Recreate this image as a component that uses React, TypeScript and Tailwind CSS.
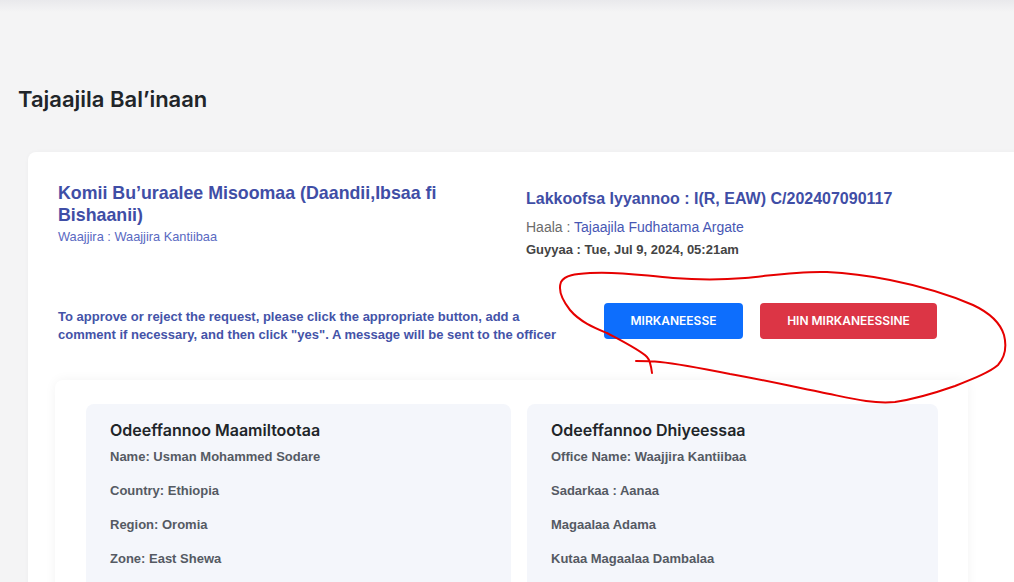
export default function App() {
	return (
		<div className="relative h-[582px] w-[1014px] overflow-hidden bg-[#f4f4f5] font-['Liberation_Sans',Arial,sans-serif]">
			{/* top bar shadow */}
			<div className="h-3 bg-gradient-to-b from-[#e9e9ec] to-[#f4f4f5]" />

			<h1 className="pl-[18px] pt-[73px] font-['Inter',sans-serif] text-[22px] leading-[28px] font-semibold text-[#212529]">
				Tajaajila Bal’inaan
			</h1>

			{/* CARD */}
			<div className="ml-[28px] mt-[39px] w-[1010px] rounded-lg bg-white pl-[30px] pt-[30px] shadow-[0_0_4px_rgba(0,0,0,0.03)]">
				<div className="flex">
					<div className="w-[468px]">
						<h2 className="w-[420px] text-[17.8px] leading-[22px] font-bold text-[#3f4ea6]">
							Komii Bu’uraalee Misoomaa (Daandii,Ibsaa fi Bishaanii)
						</h2>
						<p className="mt-[3px] text-[12.8px] leading-[16px] text-[#5a69c2]">
							Waajjira : Waajjira Kantiibaa
						</p>
					</div>
					<div className="pt-[6px]">
						<h3 className="text-[16px] leading-[22px] font-bold text-[#3f4ea6]">
							Lakkoofsa Iyyannoo : I(R, EAW) C/202407090117
						</h3>
						<p className="mt-[7px] text-[14px] leading-[20px] text-[#6b6b6b]">
							Haala : <span className="text-[#4757b4]">Tajaajila Fudhatama Argate</span>
						</p>
						<p className="mt-[4px] text-[13px] leading-[18px] font-bold text-[#444]">
							Guyyaa : Tue, Jul 9, 2024, 05:21am
						</p>
					</div>
				</div>

				{/* ACTIONS */}
				<div className="mt-[49px] flex items-start">
					<p className="mr-[42px] w-[504px] text-[13px] leading-[18px] font-bold text-[#4453a8]">
						To approve or reject the request, please click the appropriate button, add a comment if necessary, and then click "yes". A message will be sent to the officer
					</p>
					<div className="-mt-[5px] flex gap-[17px] font-['Inter',sans-serif] text-[12px] font-semibold text-white">
						<button className="h-9 w-[139px] rounded bg-[#0d6efd]">MIRKANEESSE</button>
						<button className="h-9 w-[177px] rounded bg-[#dc3545]">HIN MIRKANEESSINE</button>
					</div>
				</div>

				{/* DETAILS */}
				<div className="-ml-[3px] mt-[36px] w-[913px] rounded-t-lg bg-white pl-[31px] pt-6 shadow-[0_0_12px_rgba(0,0,0,0.05)]">
					<div className="grid grid-cols-[425px_411px] gap-4">
						<div className="h-[200px] rounded-lg bg-[#f4f6fb] pl-6 pt-4">
							<h4 className="font-['Inter',sans-serif] text-[16px] leading-[20px] font-semibold text-[#212529]">
								Odeeffannoo Maamiltootaa
							</h4>
							<ul className="mt-[8px] space-y-4 text-[13px] leading-[18px] font-semibold text-[#555a63]">
								<li>Name: Usman Mohammed Sodare</li>
								<li>Country: Ethiopia</li>
								<li>Region: Oromia</li>
								<li>Zone: East Shewa</li>
							</ul>
						</div>
						<div className="h-[200px] rounded-lg bg-[#f4f6fb] pl-6 pt-4">
							<h4 className="font-['Inter',sans-serif] text-[16px] leading-[20px] font-semibold text-[#212529]">
								Odeeffannoo Dhiyeessaa
							</h4>
							<ul className="mt-[8px] space-y-4 text-[13px] leading-[18px] font-semibold text-[#555a63]">
								<li>Office Name: Waajjira Kantiibaa</li>
								<li>Sadarkaa : Aanaa</li>
								<li>Magaalaa Adama</li>
								<li>Kutaa Magaalaa Dambalaa</li>
							</ul>
						</div>
					</div>
				</div>
			</div>

			{/* red hand-drawn annotation */}
			<svg className="pointer-events-none absolute left-0 top-0" width="1014" height="582">
				<path
					d="M652 373 C651 365 650 360 647 357 C640 350 620 340 607 333 C595 328 580 322 570 310 C562 300 558 290 561 282 C565 275 575 274 590 273 C620 271 645 276 673 278 C700 280 720 280 745 278 C775 275 800 271 827 272 C850 273 870 276 890 280 C920 286 950 295 973 305 C990 313 1000 322 1004 335 C1007 347 1005 357 998 365 C990 372 975 378 955 386 C935 393 915 399 895 402 C870 404 850 398 820 392 C790 386 760 379 730 374 C700 368 680 364 660 362 C650 361 643 361 636 361"
					fill="none"
					stroke="#e60000"
					strokeWidth="2"
					strokeLinecap="round"
				/>
			</svg>
		</div>
	);
}
